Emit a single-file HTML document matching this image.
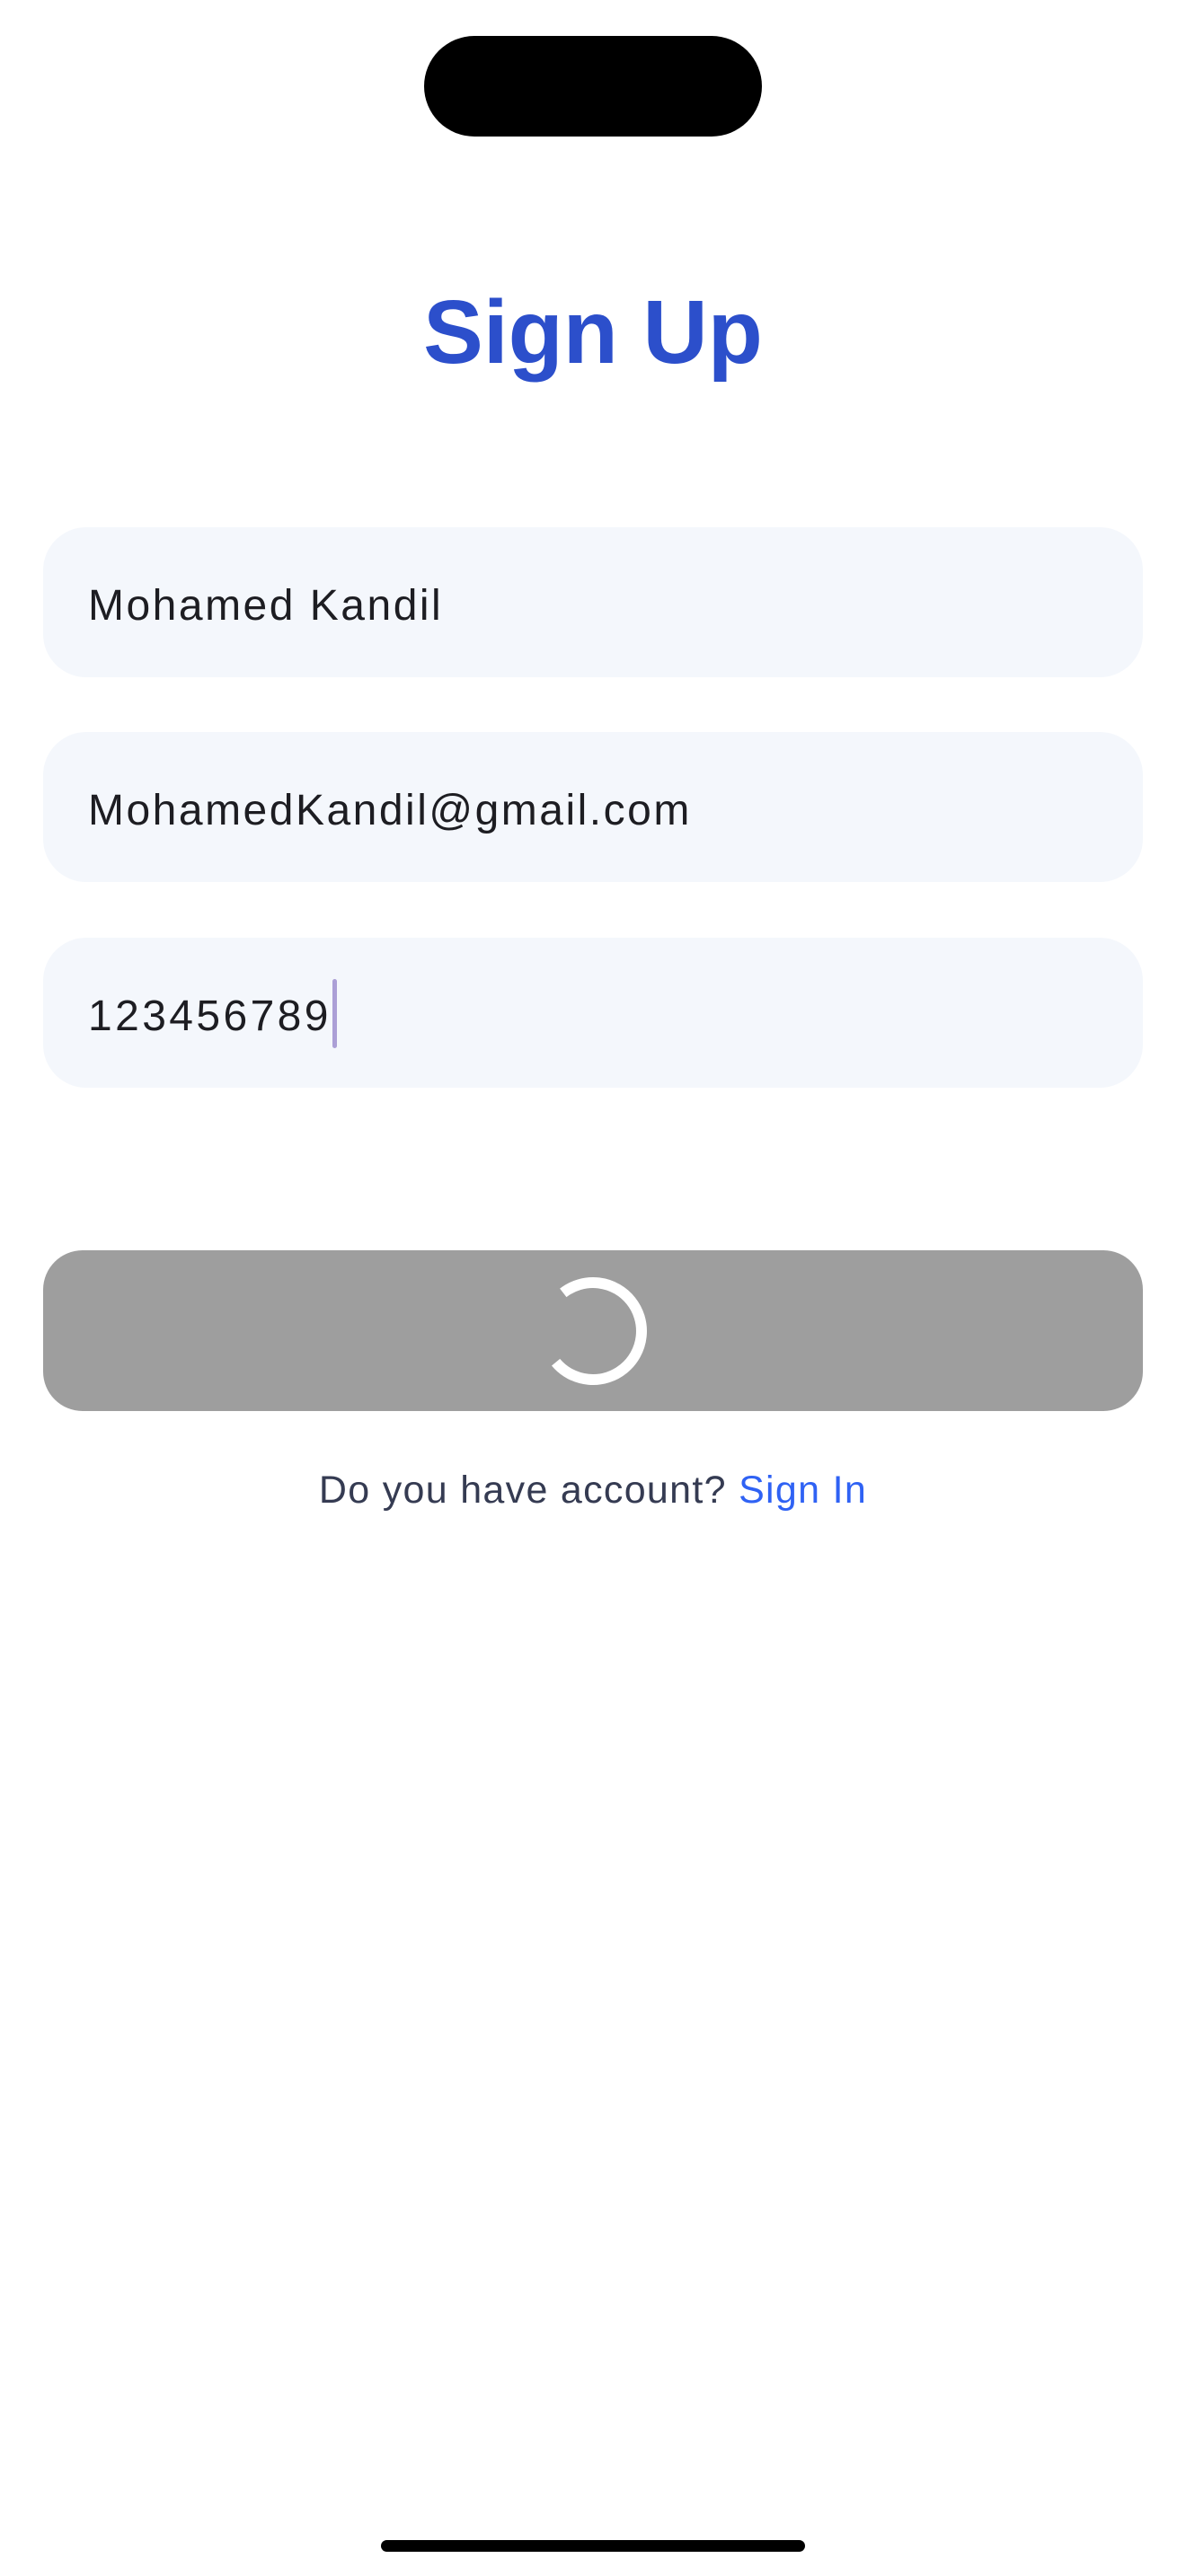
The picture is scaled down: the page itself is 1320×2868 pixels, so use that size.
<!DOCTYPE html>
<html><head><meta charset="utf-8"><style>
*{margin:0;padding:0;box-sizing:border-box}
body{width:1320px;height:2868px;background:#fff;position:relative;font-family:"Liberation Sans",sans-serif;overflow:hidden}
.island{position:absolute;left:472px;top:40px;width:376px;height:112px;background:#000;border-radius:56px}
h1{position:absolute;left:0;width:1320px;top:315px;text-align:center;font-size:100px;font-weight:bold;color:#2c4fcb;line-height:110px}
.field{position:absolute;left:48px;width:1224px;height:167px;background:#f4f7fc;border-radius:48px}
.field span{position:absolute;left:50px;top:58px;font-size:48px;letter-spacing:2.5px;color:#1d1d22;line-height:60px}
.cursor{position:absolute;left:370px;top:1090px;width:5px;height:77px;background:#ab9fd6;border-radius:3px}
.btn{position:absolute;left:48px;top:1392px;width:1224px;height:179px;background:#9e9e9e;border-radius:44px}
.foot{position:absolute;left:0;width:1320px;top:1634px;text-align:center;font-size:43px;letter-spacing:1.3px;color:#353b52;line-height:50px}
.foot b{font-weight:normal;color:#2f62f4}
.home{position:absolute;left:424px;top:2828px;width:472px;height:13px;background:#000;border-radius:7px}
</style></head><body>
<div class="island"></div>
<h1>Sign Up</h1>
<div class="field" style="top:587px"><span>Mohamed Kandil</span></div>
<div class="field" style="top:815px"><span>MohamedKandil@gmail.com</span></div>
<div class="field" style="top:1044px"><span style="letter-spacing:3.4px">123456789</span></div>
<div class="cursor"></div>
<div class="btn"></div>
<svg style="position:absolute;left:0;top:0" width="1320" height="2868">
<path d="M 626.8 1439.4 A 54 54 0 1 1 618.6 1516.7" fill="none" stroke="#fff" stroke-width="12"/>
</svg>
<div class="foot">Do you have account? <b>Sign In</b></div>
<div class="home"></div>
</body></html>
